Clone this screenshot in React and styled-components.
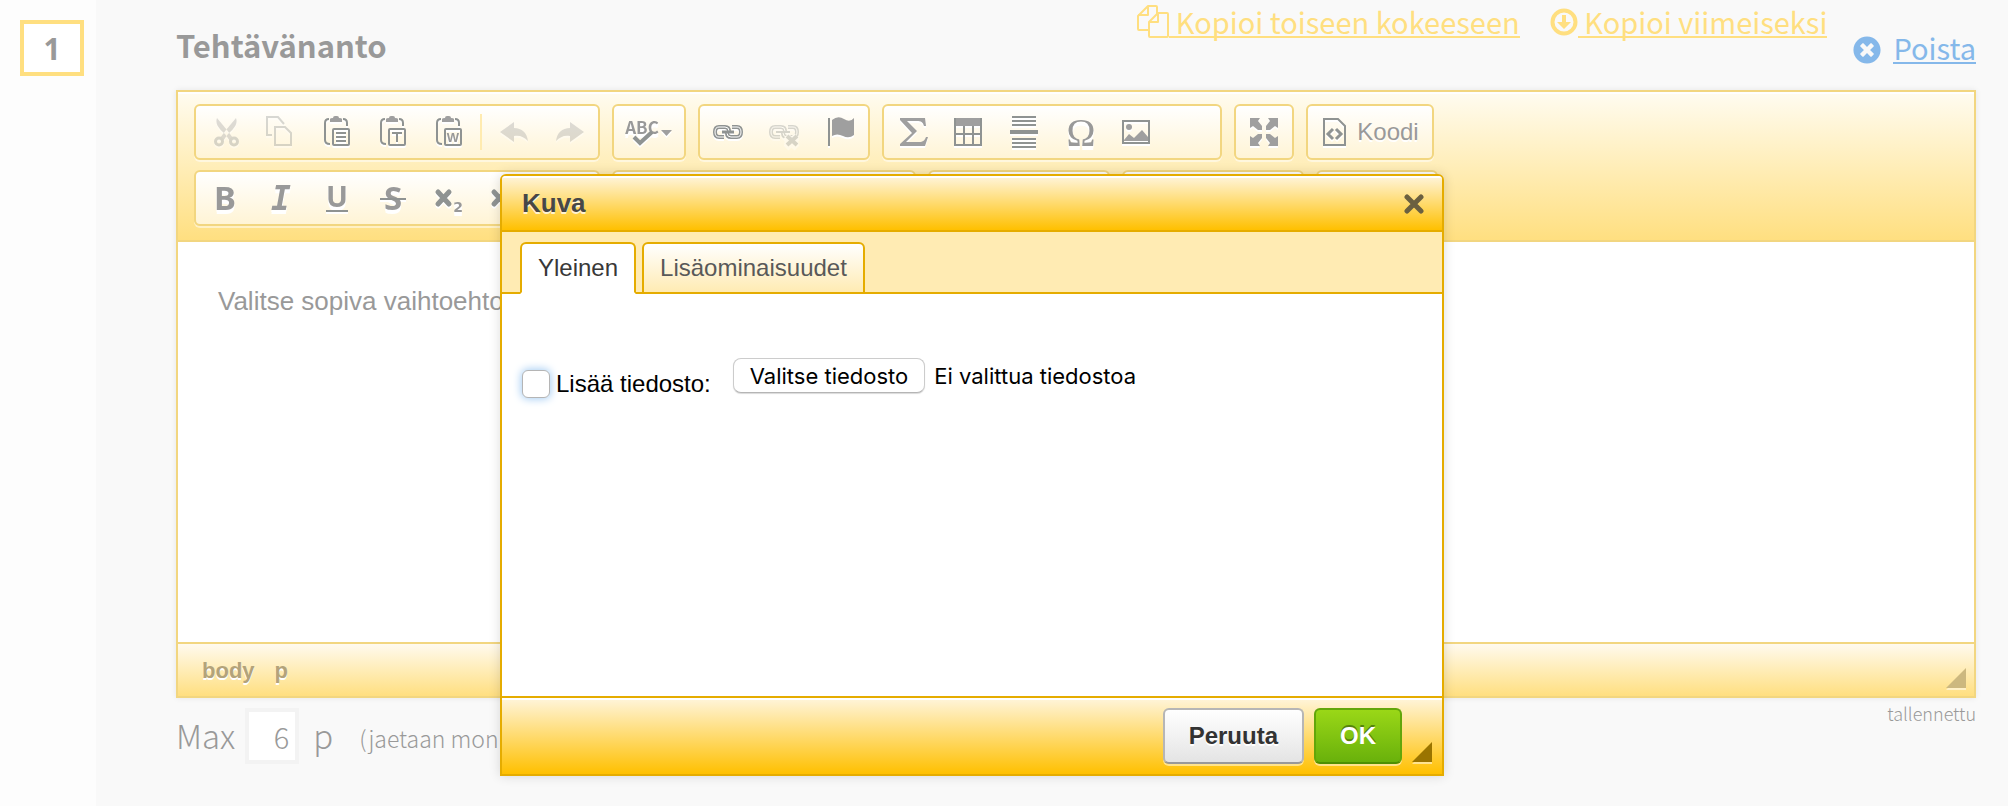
import React, { useState } from "react";
import styled, { createGlobalStyle, css } from "styled-components";
import { FaTimesCircle } from "react-icons/fa";

const sans = '"Liberation Sans", Arial, sans-serif';
const humanist = '"Noto Sans CJK SC", "Noto Sans", sans-serif';

const GlobalStyle = createGlobalStyle`
  * { box-sizing: border-box; }
  body { margin: 0; background: #f9f9f9; }
  button, input { font: inherit; }
`;

/* ---------- page ---------- */

const Page = styled.div`
  display: flex;
  min-height: 100vh;
  overflow: hidden;
  position: relative;
  font-family: ${humanist};
  color: #999;
`;

const Sidebar = styled.aside`
  flex: 0 0 96px;
  padding: 20px 12px 20px 20px;
  background: #fdfdfd;
`;

const QuestionNumber = styled.div`
  display: flex;
  align-items: center;
  justify-content: center;
  height: 56px;
  padding-top: 2px;
  border: 4px solid #ffdf80;
  background: #fff;
  font-family: "Noto Sans", sans-serif;
  font-size: 30px;
  line-height: 40px;
  font-weight: 700;
`;

const Main = styled.main`
  flex: 1;
  min-width: 0;
  padding: 0 32px 0 80px;
`;

const Header = styled.header`
  display: flex;
  align-items: flex-start;
  height: 90px;
`;

const Title = styled.h1`
  flex: 1;
  margin: 0;
  padding-top: 24px;
  font-size: 31px;
  line-height: 42px;
  font-weight: 700;
`;

const HeaderLinks = styled.nav`
  display: flex;
  gap: 30px;
  padding-top: 2px;
  margin-right: 26px;
`;

const ActionLink = styled.a`
  display: flex;
  align-items: flex-end;
  gap: ${(p) => p.$gap || 0}px;
  color: ${(p) => p.$color};
  font-size: 29px;
  line-height: 38px;
  text-decoration: none;
  white-space: pre;
  span {
    display: block;
    height: 36px;
    border-bottom: 2px solid currentColor;
  }
`;

const RemoveArea = styled.div`
  padding-top: 28px;
`;

/* ---------- editor ---------- */

const Editor = styled.section`
  border: 2px solid #f2d680;
  background: #fff;
  box-shadow: 0 0 6px rgba(0, 0, 0, 0.08);
  font-family: ${sans};
`;

const Toolbar = styled.div`
  display: flex;
  flex-direction: column;
  gap: 10px;
  padding: 12px 16px 14px;
  border-bottom: 2px solid #f2d680;
  background: linear-gradient(#fffcf1, #ffdf80);
  box-shadow: inset 0 2px #fff;
`;

const ToolbarRow = styled.div`
  display: flex;
  gap: 12px;
`;

const Group = styled.div`
  display: flex;
  align-items: center;
  height: 56px;
  width: ${(p) => (p.$width ? p.$width + "px" : "auto")};
  border: 2px solid #f2d680;
  border-radius: 6px;
  background: linear-gradient(#fff, #fff4d5);
  box-shadow: 0 2px rgba(255, 255, 255, 0.5);
`;

const Tool = styled.button`
  display: flex;
  align-items: center;
  justify-content: center;
  gap: ${(p) => p.$gap || 0}px;
  width: ${(p) => p.$width || 56}px;
  height: 52px;
  padding: 0;
  border: 0;
  background: none;
  color: #999;
  font-size: 24px;
  line-height: 32px;
  text-shadow: 0 2px #fff;
  svg {
    overflow: visible;
    filter: drop-shadow(0 2px #fff);
  }
  ${(p) => p.disabled && css`opacity: 0.35;`}
`;

const Separator = styled.i`
  width: 2px;
  height: 36px;
  margin: 0 4px;
  background: #ffebb0;
`;

const Content = styled.div`
  min-height: 400px;
  padding: 40px;
  font-size: 26px;
  line-height: 38px;
`;

const StatusBar = styled.div`
  display: flex;
  align-items: center;
  justify-content: space-between;
  height: 54px;
  padding: 0 8px 0 24px;
  border-top: 2px solid #f2d680;
  background: linear-gradient(#fffaee, #ffdf80);
`;

const Path = styled.div`
  display: flex;
  gap: 20px;
  padding-top: 2px;
  a {
    color: #b3a37a;
    font-size: 22px;
    line-height: 32px;
    font-weight: 700;
    text-decoration: none;
    text-shadow: 0 2px #fff;
  }
`;

const Resizer = styled.i`
  align-self: flex-end;
  width: 0;
  height: 0;
  margin-bottom: ${(p) => p.$bottom}px;
  border-style: solid;
  border-color: transparent;
  border-width: 0 0 20px 20px;
  border-bottom-color: ${(p) => p.$color};
  filter: drop-shadow(0 2px rgba(255, 255, 255, 0.5));
`;

/* ---------- points ---------- */

const Points = styled.div`
  display: flex;
  align-items: flex-start;
  padding-top: 10px;
  font-weight: 300;
`;

const PointsLabel = styled.label`
  display: flex;
  align-items: flex-start;
  gap: 10px;
  font-size: 33px;
  line-height: 54px;
`;

const PointsInput = styled.input`
  width: 54px;
  height: 56px;
  padding: 0 6px 0 0;
  border: 4px solid #f3f3f3;
  background: #fff;
  color: #999;
  font-size: 29px;
  line-height: 48px;
  font-weight: 300;
  text-align: right;
`;

const Unit = styled.span`
  margin-left: 4px;
`;

const Note = styled.span`
  margin-left: 26px;
  font-size: 23px;
  line-height: 60px;
  white-space: nowrap;
`;

const Saved = styled.span`
  margin-left: auto;
  font-size: 18px;
  line-height: 10px;
`;

/* ---------- dialog ---------- */

const Overlay = styled.div`
  position: absolute;
  inset: 0;
  display: flex;
  align-items: flex-start;
  justify-content: center;
  padding: 174px 64px 0 0;
`;

const Dialog = styled.div`
  width: 944px;
  max-width: 100%;
  border: 2px solid #e5ac00;
  border-radius: 6px 6px 0 0;
  background: #fff;
  box-shadow: 0 0 12px rgba(0, 0, 0, 0.14);
  font-family: ${sans};
  font-size: 24px;
  line-height: 32px;
  overflow: hidden;
`;

const DialogTitle = styled.div`
  display: flex;
  align-items: center;
  justify-content: space-between;
  height: 56px;
  padding: 0 18px 0 20px;
  border-bottom: 2px solid #e5ac00;
  background: linear-gradient(#fff5dc, #ffc000);
  box-shadow: inset 0 2px #fff;
  h2 {
    margin: 0;
    color: #474747;
    font-size: 26px;
    line-height: 32px;
    font-weight: 700;
    text-shadow: 0 2px rgba(255, 255, 255, 0.75);
  }
`;

const CloseButton = styled.button`
  display: flex;
  padding: 2px 0 0;
  border: 0;
  background: none;
`;

const Tabs = styled.div`
  display: flex;
  align-items: flex-end;
  gap: 6px;
  height: 62px;
  padding: 0 18px;
  background: #ffebb3;
  box-shadow: inset 0 -2px #e5ac00;
`;

const Tab = styled.button`
  height: 52px;
  padding: 0 16px;
  border: 2px solid #e5ac00;
  border-bottom-color: ${(p) => (p.$active ? "#fff" : "#e5ac00")};
  border-radius: 6px 6px 0 0;
  background: ${(p) => (p.$active ? "#fff" : "linear-gradient(#fff, #ffebb3)")};
  color: ${(p) => (p.$active ? "#383838" : "#595959")};
  line-height: 44px;
`;

const DialogBody = styled.div`
  display: flex;
  align-items: flex-start;
  min-height: 402px;
  padding: 64px 20px;
  color: #000;
`;

const CheckLabel = styled.label`
  display: flex;
  align-items: center;
  gap: 6px;
  padding-top: 10px;
  margin-right: 22px;
`;

const Check = styled.input`
  appearance: none;
  width: 28px;
  height: 28px;
  margin: 0;
  border: 1px solid #b5b5b5;
  border-radius: 6px;
  background: #fff;
  box-shadow: 0 0 8px 1px #a5cdf3;
`;

const FilePicker = styled.label`
  display: flex;
  align-items: center;
  gap: 9px;
  font-family: Inter, sans-serif;
  font-size: 22px;
  line-height: 34px;
  input {
    position: absolute;
    width: 1px;
    height: 1px;
    opacity: 0;
  }
`;

const FileButton = styled.span`
  height: 35px;
  padding: 0 16px;
  border: 1px solid #ccc;
  border-bottom-color: #b5b5b5;
  border-radius: 8px;
  background: #fff;
  box-shadow: 0 1px 1px rgba(0, 0, 0, 0.15);
`;

const DialogFooter = styled.div`
  display: flex;
  align-items: center;
  justify-content: flex-end;
  gap: 10px;
  height: 78px;
  padding: 0 10px;
  border-top: 2px solid #e5ac00;
  background: linear-gradient(#fff5dc, #ffc000);
  box-shadow: inset 0 2px #fff;
`;

const DialogButton = styled.button`
  height: 56px;
  padding: 0 24px;
  border: 2px solid ${(p) => (p.$primary ? "#62a60a" : "#b6b6b6")};
  border-bottom-color: ${(p) => (p.$primary ? "#4f9002" : "#999")};
  border-radius: 6px;
  background: ${(p) =>
    p.$primary ? "linear-gradient(#9ad717, #69b10b)" : "linear-gradient(#fff, #e4e4e4)"};
  color: ${(p) => (p.$primary ? "#fff" : "#333")};
  font-weight: 700;
  line-height: 48px;
  text-shadow: ${(p) => (p.$primary ? "0 -2px #55830c" : "0 2px #fff")};
  box-shadow: 0 2px rgba(255, 255, 255, 0.5);
`;

/* ---------- icons ---------- */

const Icon = ({ children, size = 32, width }) => (
  <svg
    width={width || size}
    height={size}
    viewBox={`0 0 ${width || size} ${size}`}
    fill="none"
    stroke="#8f9392"
    strokeWidth="2"
    aria-hidden="true"
  >
    {children}
  </svg>
);

const solid = { fill: "#9f9f9f", stroke: "none" };

const CutIcon = () => (
  <Icon>
    <path {...solid} d="M9 2l10 12 6 8-3 3-5-7C10 12 7 7 9 2zM28 2L18 14l-6 8 3 3 5-7c7-6 10-11 8-16z" />
    <circle cx="11" cy="25.5" r="3.500" strokeWidth="3" />
    <circle cx="26" cy="25.500" r="3.500" strokeWidth="3" />
  </Icon>
);

const CopyIcon = () => (
  <Icon>
    <path d="M8 19H3V1h11l6 7M11 11h10l6 6v12H11z" />
  </Icon>
);

const PasteIcon = ({ children }) => (
  <Icon>
    <path d="M9 3C6 3 5 5 5 7v17q0 4 5 4M23 3q4 0 4 4v3" />
    <path {...solid} d="M10 6V3q0-1 3-1 0-2 2-2h2q2 0 2 2 3 0 3 1v3z" />
    <rect x="13" y="13" width="16" height="16" rx="1" />
    {children}
  </Icon>
);

const iconText = (size, family = sans, extra = {}) => ({
  fontFamily: family,
  fontSize: size,
  fontWeight: 700,
  textAnchor: "middle",
  fill: "#999",
  stroke: "none",
  ...extra,
});

const UndoShape = () => (
  <path {...solid} d="M2 16L16 6v6c8 0 13 5 14 13-4-4-8-6-14-5v6z" />
);

const SpellIcon = () => (
  <Icon width={46}>
    <text x="16" y="18" {...iconText(17, humanist)}>
      ABC
    </text>
    <path d="M8 21l6 6L26 16" strokeWidth="4" />
    <path {...solid} d="M35 14h11l-5.500 6z" />
  </Icon>
);

const chain = "M12 21H7q-4 0-4-5t4-5h6q4 0 4 4M20 11h5q4 0 4 5t-4 5h-6q-4 0-4-4";
const LinkIcon = () => (
  <Icon>
    <path d={chain} strokeWidth="4" />
    <path d={chain} strokeWidth="1" stroke="#fff" />
    <path d="M10 16h12" strokeWidth="3" />
  </Icon>
);

const UnlinkIcon = () => (
  <Icon>
    <path d={chain} strokeWidth="4" />
    <path d={chain} strokeWidth="1" stroke="#fff" />
    <path d="M8 16h14" strokeWidth="2" />
    <path d="M18 20l11 10M29 20L18 30" strokeWidth="7" stroke="#fff" />
    <path d="M19 20l10 9M29 20l-10 9" strokeWidth="4" />
  </Icon>
);

const FlagIcon = () => (
  <Icon>
    <path d="M5 2v28" />
    <path {...solid} d="M8 4q6-5 12-1t10-1v17q-5 4-11 1T8 20z" />
  </Icon>
);

const SumIcon = () => (
  <Icon>
    <path {...solid} d="M4 2h25l1 8h-2c-1-4-3-5-7-5H11l10 10L10 26h13c4 0 6-2 7-5h2l-3 9H4v-2l12-11L4 4z" />
  </Icon>
);

const TableIcon = () => (
  <Icon>
    <rect {...solid} x="2" y="2" width="28" height="8" />
    <path d="M3 2v27h26V2M3 18h26M12 10v19M21 10v19" />
  </Icon>
);

const RuleIcon = () => (
  <Icon>
    <path d="M4 1h24M4 5h24M4 9h24M4 23h24M4 27h24M4 31h24" />
    <path d="M2 16h28" strokeWidth="4" />
  </Icon>
);

const ImageIcon = () => (
  <Icon>
    <rect x="3" y="5" width="26" height="22" />
    <circle {...solid} cx="9" cy="11" r="3" />
    <path {...solid} d="M4 24l5-6 5 4 8-8 6 7v4H4z" />
  </Icon>
);

const MaximizeIcon = () => (
  <Icon>
    {[0, 90, 180, 270].map((a) => (
      <path key={a} {...solid} transform={`rotate(${a} 16 16)`} d="M2 2h10l-2 3 4 5v4h-4L5 10l-3 2z" />
    ))}
  </Icon>
);

const SourceIcon = () => (
  <Icon width={26}>
    <path d="M3 3h14l7 7v19H3z" />
    <path d="M12 13l-5 5 5 5M15 13l5 5-5 5" strokeWidth="3" />
  </Icon>
);

const Letter = ({ children, family = '"Noto Sans", sans-serif', italic, line, size = 33, weight = 700, y = 28 }) => (
  <Icon>
    <text
      x="17"
      y={y}
      {...iconText(size, family, { fontStyle: italic ? "italic" : "normal", fontWeight: weight })}
    >
      {children}
    </text>
    {line && <path d={line} />}
  </Icon>
);

const Script = ({ up }) => (
  <Icon>
    <path d="M6 10l11 12M17 10L6 22" strokeWidth="5" strokeLinecap="round" />
    <text x="26" y={up ? 11 : 30} {...iconText(14, '"DejaVu Sans", sans-serif')}>
      2
    </text>
  </Icon>
);

const CopyLinkIcon = () => (
  <svg width="33" height="34" viewBox="0 0 33 34" fill="none" stroke="currentColor" strokeWidth="2" strokeLinejoin="round" aria-hidden="true">
    <path d="M12 26H3q-1 0-1-1V12L12 2h8q1 0 1 1v8M12 2v9H2" />
    <path d="M14 33q-1 0-1-1V18l9-9h9q1 0 1 1v22q0 1-1 1zM22 9v9h-9" />
  </svg>
);

const DownIcon = () => (
  <svg width="28" height="32" viewBox="0 0 28 32" aria-hidden="true">
    <circle cx="14" cy="16" r="11.500" fill="none" stroke="currentColor" strokeWidth="4" />
    <path fill="currentColor" d="M12 9h4v7h5l-7 7-7-7h5z" />
  </svg>
);

const CloseIcon = () => (
  <svg width="20" height="20" viewBox="0 0 20 20" aria-hidden="true">
    <path d="M3 3l14 14M17 3L3 17" stroke="#6b6040" strokeWidth="5" strokeLinecap="round" />
  </svg>
);

/* ---------- app ---------- */

export default function App() {
  const [checked, setChecked] = useState(false);
  return (
    <>
      <GlobalStyle />
      <Page>
        <Sidebar>
          <QuestionNumber>1</QuestionNumber>
        </Sidebar>
        <Main>
          <Header>
            <Title>Tehtävänanto</Title>
            <HeaderLinks>
              <ActionLink href="#copy" $color="#ffdf80">
                <CopyLinkIcon />
                <span> Kopioi toiseen kokeeseen</span>
              </ActionLink>
              <ActionLink href="#last" $color="#ffdf80">
                <DownIcon />
                <span> Kopioi viimeiseksi</span>
              </ActionLink>
            </HeaderLinks>
            <RemoveArea>
              <ActionLink href="#remove" $color="#85b8ea" $gap={12}>
                <FaTimesCircle size={28} aria-hidden="true" />
                <span>Poista</span>
              </ActionLink>
            </RemoveArea>
          </Header>

          <Editor>
            <Toolbar>
              <ToolbarRow>
                <Group>
                  <Tool aria-label="Leikkaa" disabled><CutIcon /></Tool>
                  <Tool aria-label="Kopioi" disabled><CopyIcon /></Tool>
                  <Tool aria-label="Liitä">
                    <PasteIcon><path d="M16 17h10M16 21h10M16 25h10" /></PasteIcon>
                  </Tool>
                  <Tool aria-label="Liitä tekstinä">
                    <PasteIcon><path d="M16 17h10M21 17v9" /></PasteIcon>
                  </Tool>
                  <Tool aria-label="Liitä Wordista">
                    <PasteIcon><text x="21" y="26" {...iconText(13)}>W</text></PasteIcon>
                  </Tool>
                  <Separator />
                  <Tool aria-label="Kumoa" disabled><Icon><UndoShape /></Icon></Tool>
                  <Tool aria-label="Toista" disabled>
                    <Icon><g transform="translate(32 0) scale(-1 1)"><UndoShape /></g></Icon>
                  </Tool>
                </Group>
                <Group>
                  <Tool aria-label="Oikolue" $width={70}><SpellIcon /></Tool>
                </Group>
                <Group>
                  <Tool aria-label="Linkki"><LinkIcon /></Tool>
                  <Tool aria-label="Poista linkki" disabled><UnlinkIcon /></Tool>
                  <Tool aria-label="Ankkuri"><FlagIcon /></Tool>
                </Group>
                <Group $width={340}>
                  <Tool aria-label="Kaava"><SumIcon /></Tool>
                  <Tool aria-label="Taulu"><TableIcon /></Tool>
                  <Tool aria-label="Vaakaviiva"><RuleIcon /></Tool>
                  <Tool aria-label="Erikoismerkki">
                    <Letter family={'"Liberation Serif", serif'} size={39} weight={400} y={30}>Ω</Letter>
                  </Tool>
                  <Tool aria-label="Kuva"><ImageIcon /></Tool>
                </Group>
                <Group>
                  <Tool aria-label="Suurenna"><MaximizeIcon /></Tool>
                </Group>
                <Group>
                  <Tool $width={124} $gap={10}><SourceIcon />Koodi</Tool>
                </Group>
              </ToolbarRow>
              <ToolbarRow>
                <Group $width={406}>
                  <Tool aria-label="Lihavoitu"><Letter>B</Letter></Tool>
                  <Tool aria-label="Kursivoitu">
                    <Letter family={'"DejaVu Sans Mono", monospace'} italic>I</Letter>
                  </Tool>
                  <Tool aria-label="Alleviivattu"><Letter size={29} y={25} line="M6 29h22">U</Letter></Tool>
                  <Tool aria-label="Yliviivattu"><Letter line="M4 17h26">S</Letter></Tool>
                  <Tool aria-label="Alaindeksi"><Script /></Tool>
                  <Tool aria-label="Yläindeksi"><Script up /></Tool>
                </Group>
                <Group $width={304} />
                <Group $width={182} />
                <Group $width={182} />
                <Group $width={122} />
              </ToolbarRow>
            </Toolbar>
            <Content>Valitse sopiva vaihtoehto</Content>
            <StatusBar>
              <Path>
                <a href="#body">body</a>
                <a href="#p">p</a>
              </Path>
              <Resizer $color="#ccb87f" $bottom={8} />
            </StatusBar>
          </Editor>

          <Points>
            <PointsLabel>
              Max
              <PointsInput type="text" defaultValue="6" />
              <Unit>p</Unit>
            </PointsLabel>
            <Note>(jaetaan monivalintojen kesken)</Note>
            <Saved>tallennettu</Saved>
          </Points>
        </Main>

        <Overlay>
          <Dialog role="dialog" aria-labelledby="dialog-title">
            <DialogTitle>
              <h2 id="dialog-title">Kuva</h2>
              <CloseButton aria-label="Sulje"><CloseIcon /></CloseButton>
            </DialogTitle>
            <Tabs role="tablist">
              <Tab role="tab" aria-selected="true" $active>Yleinen</Tab>
              <Tab role="tab" aria-selected="false">Lisäominaisuudet</Tab>
            </Tabs>
            <DialogBody>
              <CheckLabel>
                <Check type="checkbox" checked={checked} onChange={(e) => setChecked(e.target.checked)} />
                Lisää tiedosto:
              </CheckLabel>
              <FilePicker>
                <input type="file" />
                <FileButton>Valitse tiedosto</FileButton>
                Ei valittua tiedostoa
              </FilePicker>
            </DialogBody>
            <DialogFooter>
              <DialogButton>Peruuta</DialogButton>
              <DialogButton $primary>OK</DialogButton>
              <Resizer $color="#9a7400" $bottom={12} />
            </DialogFooter>
          </Dialog>
        </Overlay>
      </Page>
    </>
  );
}
